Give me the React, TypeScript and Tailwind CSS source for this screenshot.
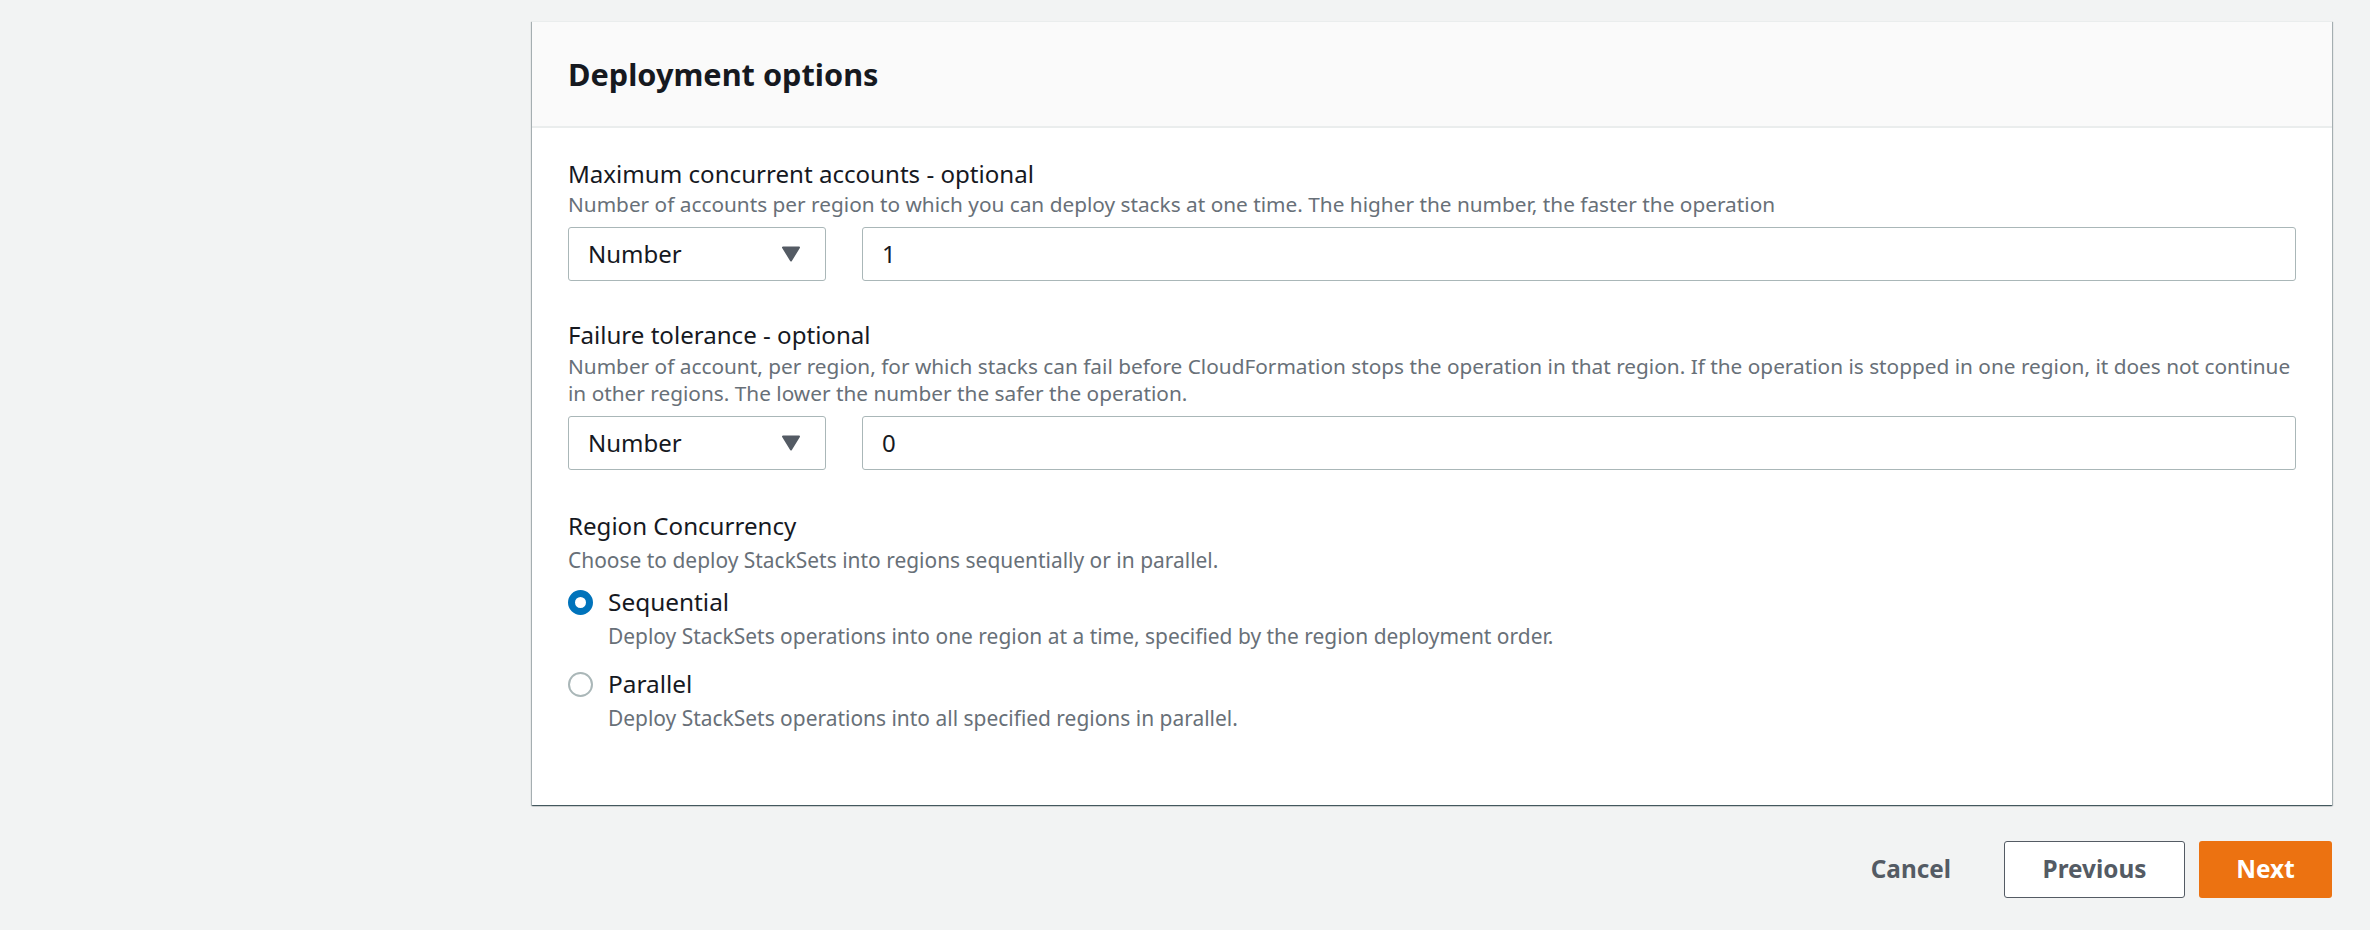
const font = "font-['Noto_Sans',sans-serif]";

function Arrow() {
  return (
    <svg width="20" height="16" viewBox="0 0 20 16" className="shrink-0">
      <path d="M2 1.5 H18 L10 14.5 Z" fill="#545b64" stroke="#545b64" strokeWidth="2" strokeLinejoin="round" />
    </svg>
  );
}

function Field({ label, desc, value, descH }: { label: string; desc: React.ReactNode; value: string; descH: string }) {
  return (
    <div className="flex flex-col">
      <div className="h-[32px] flex items-center text-[24.1px] leading-[32px] text-[#16191f]">{label}</div>
      <div className={`${descH} text-[20.8px] leading-[27px] text-[#687078]`}>{desc}</div>
      <div className="flex gap-[36px] h-[54px] mt-[9px]">
        <div className="w-[258px] shrink-0 border border-[#aab7b8] rounded-[3px] flex items-center justify-between pl-[19px] pr-[24px] text-[24px] text-[#16191f]">
          <span>Number</span>
          <Arrow />
        </div>
        <div className="flex-1 border border-[#aab7b8] rounded-[3px] flex items-center pl-[19px] text-[24px] text-[#16191f]">{value}</div>
      </div>
    </div>
  );
}

function Radio({ checked, label, desc }: { checked?: boolean; label: string; desc: string }) {
  return (
    <div className="flex gap-[15px]">
      <div className="h-[32px] flex items-center shrink-0">
        {checked ? (
          <div className="w-[25px] h-[25px] rounded-full border-[7px] border-[#0073bb] bg-white" />
        ) : (
          <div className="w-[25px] h-[25px] rounded-full border-2 border-[#aab7b8] bg-white" />
        )}
      </div>
      <div className="flex flex-col">
        <div className="h-[32px] flex items-center text-[24.4px] text-[#16191f]">{label}</div>
        <div className="mt-[5px] text-[20.95px] leading-[27px] text-[#687078]">{desc}</div>
      </div>
    </div>
  );
}

export default function App() {
  return (
    <div className={`${font} w-[2370px] h-[930px] overflow-hidden bg-[#f2f3f3] pt-[21px] pl-[532px] pr-[38px]`}>
      <div className="h-[784px] bg-white border-t border-[#eaeded] shadow-[0_1px_1px_0_rgba(0,28,36,0.5),1px_1px_1px_0_rgba(0,28,36,0.25),-1px_1px_1px_0_rgba(0,28,36,0.25)] flex flex-col">
        <div className="h-[106px] shrink-0 bg-[#fafafa] border-b-2 border-[#eaeded] flex items-center pl-[36px]">
          <h2 className="text-[30.7px] font-bold text-[#16191f]">Deployment options</h2>
        </div>
        <div className="pl-[36px] pr-[36px] pt-[30px] flex flex-col">
          <Field
            label="Maximum concurrent accounts - optional"
            descH="h-[27px] mt-[1px]"
            value="1"
            desc="Number of accounts per region to which you can deploy stacks at one time. The higher the number, the faster the operation"
          />
          <div className="mt-[38px]">
            <Field
              label="Failure tolerance - optional"
              descH="h-[54px] mt-[2px]"
              value="0"
              desc="Number of account, per region, for which stacks can fail before CloudFormation stops the operation in that region. If the operation is stopped in one region, it does not continue in other regions. The lower the number the safer the operation."
            />
          </div>
          <div className="mt-[40px] h-[32px] flex items-center text-[24.1px] text-[#16191f]">Region Concurrency</div>
          <div className="mt-[5px] text-[20.95px] leading-[27px] text-[#687078]">Choose to deploy StackSets into regions sequentially or in parallel.</div>
          <div className="mt-[12px] flex flex-col gap-[18px]">
            <Radio checked label="Sequential" desc="Deploy StackSets operations into one region at a time, specified by the region deployment order." />
            <Radio label="Parallel" desc="Deploy StackSets operations into all specified regions in parallel." />
          </div>
        </div>
      </div>
      <div className="mt-[36px] flex justify-end items-center text-[24.3px] font-bold text-[#545b64]">
        <span className="mr-[53px]">Cancel</span>
        <div className="w-[181px] h-[57px] bg-white border border-[#545b64] rounded-[3px] flex items-center justify-center">Previous</div>
        <div className="ml-[14px] w-[133px] h-[57px] bg-[#ec7211] rounded-[3px] flex items-center justify-center text-white">Next</div>
      </div>
    </div>
  );
}
